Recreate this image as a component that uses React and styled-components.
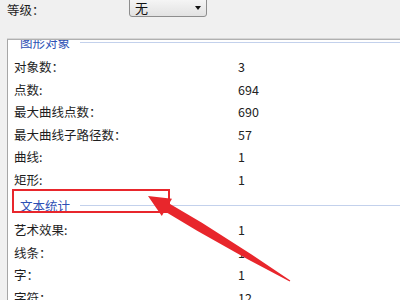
import React from "react";
import styled, { createGlobalStyle } from "styled-components";

const Global = createGlobalStyle`
  html, body { margin: 0; padding: 0; overflow: hidden; background: #f0f0f0; }
  body { font-family: "Noto Sans CJK SC", "Noto Sans", sans-serif; color: #1e1e1e; }
`;

const Page = styled.div`
  position: relative;
  width: 400px;
  height: 300px;
  display: flex;
  flex-direction: column;
  background: #f0f0f0;
  overflow: hidden;
`;

const TopBar = styled.div`
  height: 39px;
  flex: none;
  display: flex;
  align-items: flex-start;
  padding-left: 7px;
`;

const FieldLabel = styled.div`
  width: 122px;
  font-size: 12.5px;
  line-height: 20px;
  color: #1e1e1e;
`;

const Select = styled.div`
  margin-top: -3px;
  width: 78px;
  height: 20px;
  box-sizing: border-box;
  border: 1px solid #8d8d8d;
  border-radius: 3px;
  background: linear-gradient(#f7f7f7, #e2e2e2);
  display: flex;
  align-items: center;
  justify-content: space-between;
  padding: 0 5px 0 5px;
`;

const SelectText = styled.span`
  font-size: 13px;
  line-height: 18px;
  padding-top: 2px;
  color: #111;
`;

const Caret = styled.span`
  width: 0;
  height: 0;
  margin-top: 2px;
  border-left: 3.5px solid transparent;
  border-right: 3.5px solid transparent;
  border-top: 4px solid #111;
`;

const Panel = styled.div`
  flex: 1;
  margin-left: 7px;
  background: #fff;
  border-left: 1px solid #a6a6a6;
  border-top: 1px solid #b0b0b0;
  box-shadow: 0 -1px 0 #d6d6d6;
  overflow: hidden;
`;

const Scroll = styled.div`
  margin-top: -12px;
`;

const Header = styled.div`
  height: 28px;
  display: flex;
  align-items: center;
  gap: 10px;
  padding-left: 12px;
`;

const HeaderTitle = styled.span`
  font-size: 12.5px;
  color: #2d50b5;
`;

const HeaderLine = styled.span`
  flex: 1;
  height: 1px;
  background: #c3d1ec;
`;

const Row = styled.div`
  height: 22.5px;
  display: grid;
  grid-template-columns: 224px 1fr;
  padding-left: 6px;
  font-size: 12.5px;
  line-height: 22.5px;
`;

const Label = styled.span`
  color: #1e1e1e;
  white-space: nowrap;
`;

const Value = styled.span`
  color: #222;
`;

const Overlay = styled.svg`
  position: absolute;
  left: 0;
  top: 0;
  pointer-events: none;
`;

const groups = [
  {
    title: "图形对象",
    rows: [
      ["对象数：", "3"],
      ["点数:", "694"],
      ["最大曲线点数：", "690"],
      ["最大曲线子路径数：", "57"],
      ["曲线:", "1"],
      ["矩形:", "1"],
    ],
  },
  {
    title: "文本统计",
    rows: [
      ["艺术效果:", "1"],
      ["线条：", "1"],
      ["字：", "1"],
      ["字符：", "12"],
    ],
  },
];

const arrowPoints = [
  [148, 196],
  [172.0, 198.7],
  [169.2, 203.4],
  [201.9, 222.8],
  [251.6, 254.6],
  [290.3, 280.6],
  [289.7, 281.4],
  [248.6, 259.8],
  [197.1, 230.8],
  [164.6, 211.2],
  [161.8, 215.9],
]
  .map((p) => p.join(","))
  .join(" ");

export default function App() {
  return (
    <>
      <Global />
      <Page>
        <TopBar>
          <FieldLabel>等级：</FieldLabel>
          <Select>
            <SelectText>无</SelectText>
            <Caret />
          </Select>
        </TopBar>
        <Panel>
          <Scroll>
            {groups.map((g) => (
              <React.Fragment key={g.title}>
                <Header>
                  <HeaderTitle>{g.title}</HeaderTitle>
                  <HeaderLine />
                </Header>
                {g.rows.map(([l, v]) => (
                  <Row key={l}>
                    <Label>{l}</Label>
                    <Value>{v}</Value>
                  </Row>
                ))}
              </React.Fragment>
            ))}
          </Scroll>
        </Panel>
        <Overlay width="400" height="300" viewBox="0 0 400 300">
          <rect x="13" y="190" width="156" height="22" fill="none" stroke="#e8262c" strokeWidth="2" />
          <polygon points={arrowPoints} fill="#e8262c" />
        </Overlay>
      </Page>
    </>
  );
}
